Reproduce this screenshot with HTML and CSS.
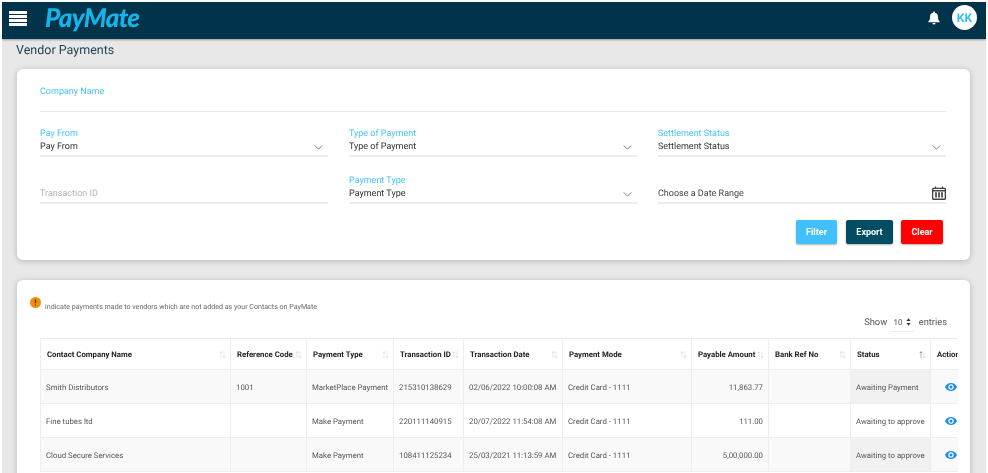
FILE: index.html
```html
<!DOCTYPE html>
<html lang="en">
<head>
<meta charset="utf-8">
<title>Vendor Payments</title>
<link rel="stylesheet" href="styles.css">
</head>
<body>
<div class="page">
  <header class="topbar">
    <div class="burger"><span></span><span></span><span></span><span></span></div>
    <div class="logo">PayMate</div>
    <div class="top-right">
      <svg class="bell" viewBox="0 0 14 16" width="12" height="14"><path fill="#fff" d="M7 0.5a1.2 1.2 0 0 0-1.2 1.3C3.6 2.3 2.4 4 2.4 6.2c0 3.2-.8 4.6-2 5.9-.3.4-.1 1 .4 1h12.4c.5 0 .7-.6.4-1-1.200-1.300-2-2.700-2-5.900 0-2.200-1.200-3.900-3.400-4.400A1.200 1.200 0 0 0 7 .5zM5.200 13.900a1.800 1.800 0 0 0 3.600 0z"/></svg>
      <div class="avatar">KK</div>
    </div>
  </header>
  <h1 class="title">Vendor Payments</h1>

  <section class="card filters">
    <div class="company">
      <span class="lbl">Company Name</span>
    </div>
    <div class="form-grid">
      <div class="field"><span class="lbl">Pay From</span><span class="val">Pay From</span><svg class="chev" viewBox="0 0 10 6" width="9" height="5"><path d="M.5.5 5 5 9.500.5" fill="none" stroke="#666" stroke-width="1"/></svg></div>
      <div class="field"><span class="lbl">Type of Payment</span><span class="val">Type of Payment</span><svg class="chev" viewBox="0 0 10 6" width="9" height="5"><path d="M.5.5 5 5 9.500.5" fill="none" stroke="#666" stroke-width="1"/></svg></div>
      <div class="field"><span class="lbl">Settlement Status</span><span class="val">Settlement Status</span><svg class="chev" viewBox="0 0 10 6" width="9" height="5"><path d="M.5.5 5 5 9.500.5" fill="none" stroke="#666" stroke-width="1"/></svg></div>
      <div class="field"><span class="lbl"></span><span class="val muted">Transaction ID</span></div>
      <div class="field"><span class="lbl">Payment Type</span><span class="val">Payment Type</span><svg class="chev" viewBox="0 0 10 6" width="9" height="5"><path d="M.5.5 5 5 9.500.5" fill="none" stroke="#666" stroke-width="1"/></svg></div>
      <div class="field"><span class="lbl"></span><span class="val grey">Choose a Date Range</span><svg class="cal" viewBox="0 0 14 14" width="14" height="14"><path fill="none" stroke="#444" stroke-width="1.400" d="M1.600 2.400h10.800a1 1 0 0 1 1 1v8.800a1 1 0 0 1-1 1H1.600a1 1 0 0 1-1-1V3.400a1 1 0 0 1 1-1z"/><path stroke="#444" stroke-width="1.400" d="M3.500 .6v2.400M10.500 .6v2.400M.6 4.700h12.800"/><path stroke="#444" stroke-width="1.700" d="M4 6.200v5.400M7 6.200v5.400M10 6.200v5.400"/></svg></div>
    </div>
    <div class="actions">
      <button class="btn btn-filter">Filter</button>
      <button class="btn btn-export">Export</button>
      <button class="btn btn-clear">Clear</button>
    </div>
  </section>

  <section class="card results">
    <div class="note">
      <svg class="warn" viewBox="0 0 11 11" width="11" height="11"><circle cx="5.500" cy="5.500" r="5.500" fill="#ef8f0c"/><path d="M5.500 2.400v3.800M5.500 7.400v1.200" stroke="#5b3300" stroke-width="1.300"/></svg>
      <span class="note-text">indicate payments made to vendors which are not added as your Contacts on PayMate</span>
    </div>
    <div class="length">Show <span class="len-sel">10 <svg viewBox="0 0 6 9" width="5" height="8"><path fill="#333" d="M3 0 5.500 3.200H.5zM3 9 .5 5.800h5z"/></svg></span> entries</div>
    <div class="table-wrap">
      <table class="grid">
        <colgroup>
          <col class="c1"><col class="c2"><col class="c3"><col class="c4"><col class="c5"><col class="c6"><col class="c7"><col class="c8"><col class="c9"><col class="c10">
        </colgroup>
        <thead>
          <tr>
            <th>Contact Company Name<i class="sort">↑↓</i></th>
            <th>Reference Code<i class="sort">↑↓</i></th>
            <th>Payment Type<i class="sort">↑↓</i></th>
            <th>Transaction ID<i class="sort">↑↓</i></th>
            <th>Transaction Date<i class="sort">↑↓</i></th>
            <th>Payment Mode<i class="sort">↑↓</i></th>
            <th>Payable Amount<i class="sort">↑↓</i></th>
            <th>Bank Ref No<i class="sort">↑↓</i></th>
            <th>Status<i class="sort on">↑<b>↓</b></i></th>
            <th>Action</th>
          </tr>
        </thead>
        <tbody>
          <tr>
            <td>Smith Distributors</td><td>1001</td><td>MarketPlace Payment</td><td>215310138629</td><td>02/06/2022 10:00:08 AM</td><td>Credit Card - 1111</td><td class="num">11,863.77</td><td></td><td class="st">Awaiting Payment</td>
            <td class="act"><svg viewBox="0 0 12 8" width="12" height="8"><path fill="#1a8fe8" fill-rule="evenodd" d="M6 0C3.300 0 1.200 1.600 0 4c1.200 2.400 3.300 4 6 4s4.800-1.600 6-4C10.800 1.600 8.700 0 6 0zm0 1.300a2.700 2.700 0 1 1 0 5.400 2.700 2.700 0 0 1 0-5.400zm0 1.200a1.500 1.500 0 1 0 0 3 1.500 1.500 0 0 0 0-3z"/></svg></td>
          </tr>
          <tr>
            <td>Fine tubes ltd</td><td></td><td>Make Payment</td><td>220111140915</td><td>20/07/2022 11:54:08 AM</td><td>Credit Card - 1111</td><td class="num">111.00</td><td></td><td class="st">Awaiting to approve</td>
            <td class="act"><svg viewBox="0 0 12 8" width="12" height="8"><path fill="#1a8fe8" fill-rule="evenodd" d="M6 0C3.300 0 1.200 1.600 0 4c1.200 2.400 3.300 4 6 4s4.800-1.600 6-4C10.800 1.600 8.700 0 6 0zm0 1.300a2.700 2.700 0 1 1 0 5.400 2.700 2.700 0 0 1 0-5.400zm0 1.200a1.500 1.500 0 1 0 0 3 1.500 1.500 0 0 0 0-3z"/></svg></td>
          </tr>
          <tr>
            <td>Cloud Secure Services</td><td></td><td>Make Payment</td><td>108411125234</td><td>25/03/2021 11:13:59 AM</td><td>Credit Card - 1111</td><td class="num">5,00,000.00</td><td></td><td class="st">Awaiting to approve</td>
            <td class="act"><svg viewBox="0 0 12 8" width="12" height="8"><path fill="#1a8fe8" fill-rule="evenodd" d="M6 0C3.300 0 1.200 1.600 0 4c1.200 2.400 3.300 4 6 4s4.800-1.600 6-4C10.800 1.600 8.700 0 6 0zm0 1.300a2.700 2.700 0 1 1 0 5.400 2.700 2.700 0 0 1 0-5.400zm0 1.200a1.500 1.500 0 1 0 0 3 1.500 1.500 0 0 0 0-3z"/></svg></td>
          </tr>
        </tbody>
      </table>
    </div>
  </section>
</div>
</body>
</html>
```
FILE: styles.css
```css
* { box-sizing: border-box; }
html, body { margin: 0; padding: 0; height: 473px; overflow: hidden; background: #fff; }
body { font-family: Roboto, "Liberation Sans", sans-serif; color: #333; text-rendering: geometricPrecision; }

.page {
  margin: 2px 2px 0 2px;
  height: 471px;
  background: #e8e8e8;
  overflow: hidden;
  display: flex;
  flex-direction: column;
  filter: blur(.4px);
}

.topbar {
  flex: none;
  height: 37px;
  background: #01344a;
  box-shadow: 0 1px 2px rgba(0,0,0,.35);
  display: flex;
  align-items: center;
  padding: 0 9px 0 7px;
}
.burger { width: 18px; display: flex; flex-direction: column; gap: 1px; margin-top: -5px; }
.burger span { height: 3px; background: #fff; }
.logo {
  margin-left: 18px;
  margin-top: -7px;
  font: italic 900 26px Lato, sans-serif;
  letter-spacing: -.7px;
  color: #13b5ea;
}
.top-right { margin-left: auto; align-self: flex-start; margin-top: 3px; display: flex; align-items: center; gap: 12px; }
.bell { display: block; }
.avatar {
  width: 25px; height: 25px; border-radius: 50%;
  background: #fff; color: #35c0f5;
  font-size: 12px; font-weight: 700;
  display: flex; align-items: center; justify-content: center;
}

.title {
  flex: none;
  margin: 3px 0 0 14px;
  height: 27px;
  font-size: 12.500px;
  font-weight: 400;
  line-height: 18px;
  color: #1f3f4f;
}

.card {
  flex: none;
  margin-left: 15px;
  width: 953px;
  background: #fff;
  border-radius: 6px;
  box-shadow: 0 1px 6px rgba(0,0,0,.22);
}

.filters { height: 191px; padding: 17px 24px 0 23px; }
.lbl { display: block; height: 13px; font-size: 9px; line-height: 13px; color: #45c3fb; }
.company { height: 26px; border-bottom: 1px solid #e6e6e6; }
.form-grid {
  display: grid;
  grid-template-columns: repeat(3, 288px);
  column-gap: 21px;
  row-gap: 17px;
  margin-top: 15px;
}
.field {
  position: relative;
  height: 30px;
  padding-top: 1px;
  border-bottom: 2px solid #ececec;
}
.val { display: block; height: 13px; font-size: 9px; line-height: 12px; color: #333; }
.val.muted { color: #b3b3b3; }
.val.grey { color: #444; }
.chev { position: absolute; right: 5px; bottom: 5px; }
.cal { position: absolute; right: 0; bottom: 2px; }

.actions { display: flex; justify-content: flex-end; gap: 8px; margin-top: 16px; padding-right: 3px; }
.btn {
  height: 24px;
  border: 0;
  border-radius: 2px;
  color: #fff;
  font: 700 9px Roboto, sans-serif;
  box-shadow: 0 1px 2px rgba(0,0,0,.3);
}
.btn-filter { width: 41px; margin-right: 1px; background: #40c1fd; }
.btn-export { width: 47px; background: #024d63; }
.btn-clear { width: 42px; background: #ff0000; }

.results { margin-top: 20px; height: 200px; padding: 17px 12px 0 13px; border-radius: 6px 6px 0 0; }
.note { display: flex; align-items: flex-start; gap: 4px; height: 12px; font-size: 7.100px; color: #666; }
.note-text { margin-top: 5px; }
.warn { display: block; }
.length { margin-top: 6px; height: 16px; padding-right: 11px; text-align: right; font-size: 9.300px; line-height: 16px; color: #555; }
.len-sel { display: inline-block; width: 25px; margin: 0 1px; padding-left: 3px; text-align: left; font-size: 8px; border-bottom: 1px solid #eee; }
.len-sel svg { margin-left: 2px; vertical-align: -1px; }

.table-wrap { margin: 7px 0 0 10px; width: 918px; overflow: hidden; }
.grid { table-layout: fixed; border-collapse: collapse; width: 978px; font-size: 7.800px; color: #555; }
.c1 { width: 190px; } .c2 { width: 76px; } .c3 { width: 87px; } .c4 { width: 70px; } .c5 { width: 99px; }
.c6 { width: 129px; } .c7 { width: 77px; } .c8 { width: 82px; } .c9 { width: 80px; } .c10 { width: 88px; }
.grid th, .grid td { border: 1px solid #eeeeee; white-space: nowrap; overflow: hidden; }
.grid th {
  position: relative;
  height: 31px;
  padding: 0 6px;
  text-align: left;
  font-weight: 700;
  font-size: 7.800px;
  color: #222;
}
.grid td { height: 34px; padding: 1px 5px 0 5px; }
.grid tbody tr:nth-child(odd) td { background: #f9f9f9; }
.grid tbody tr:nth-child(odd) td.st { background: #f1f1f1; }
.grid td.num { text-align: right; padding-right: 5px; }
.grid td.act { padding-left: 14px; }
.act svg { display: block; }
.sort { position: absolute; right: 6px; top: 8px; font-style: normal; font-weight: 400; font-size: 12px; letter-spacing: -3px; color: #d8d8d8; }
.sort.on { color: #777; }
.sort b { font-weight: 400; color: #d8d8d8; }
```
